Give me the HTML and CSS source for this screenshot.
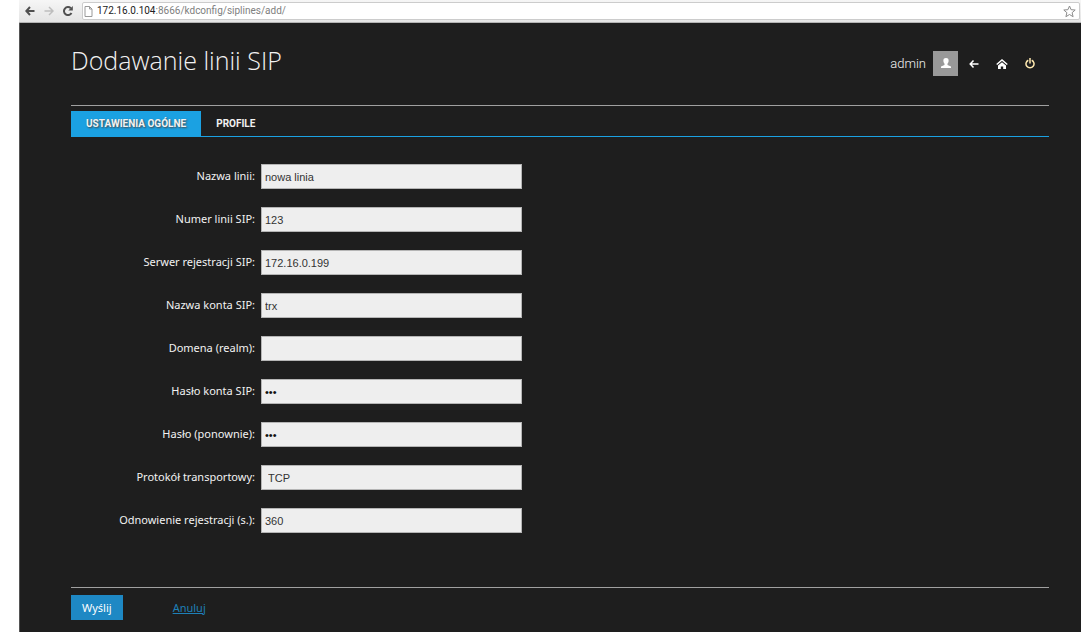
FILE: index.html
```html
<!DOCTYPE html>
<html lang="pl">
<head>
<meta charset="utf-8">
<title>Dodawanie linii SIP</title>
<link rel="stylesheet" href="styles.css">
</head>
<body>
<div class="window">
  <div class="toolbar">
    <button class="nav" type="button" aria-label="Wstecz"><svg width="10" height="10" viewBox="0 0 10 10" fill="none" stroke="#505050" stroke-width="2"><path d="M9.500 5H1.500M5 1L1.300 5L5 9"/></svg></button>
    <button class="nav" type="button" aria-label="Dalej"><svg width="10" height="10" viewBox="0 0 10 10" fill="none" stroke="#bdbdbd" stroke-width="1.500"><path d="M.5 5H8.500M5 1L9 5L5 9"/></svg></button>
    <button class="nav" type="button" aria-label="Odśwież"><svg width="10" height="10" viewBox="0 0 10 10"><path d="M8.500 7A4 4 0 1 1 7.800 2.200" fill="none" stroke="#505050" stroke-width="2"/><path d="M9.800 0V4.500H5.300Z" fill="#505050"/></svg></button>
    <div class="address">
      <svg width="9" height="11" viewBox="0 0 9 11" fill="#fff" stroke="#999"><path d="M1 .5H5.500L8 3V10.500H1ZM5.500 .5V3H8"/></svg>
      <span class="url"><span class="host">172.16.0.104</span>:8666/kdconfig/siplines/add/</span>
      <button class="star" type="button" aria-label="Zakładka"><svg width="13" height="13" viewBox="0 0 13 13" fill="none" stroke="#8c8c8c"><path d="M6.500 1L8.100 4.700L12.200 5L9.100 7.700L10.100 11.700L6.500 9.500L2.900 11.700L3.900 7.700L.8 5L4.900 4.700Z"/></svg></button>
    </div>
  </div>
  <main class="page">
    <header class="header">
      <h1 class="title">Dodawanie linii SIP</h1>
      <div class="user">
        <span class="name">admin</span>
        <span class="avatar"><svg width="12" height="11" viewBox="0 0 12 11" fill="#fff"><path d="M6 0C8 0 8.800 1.300 8.600 3C8.500 4.500 7.800 5.200 7.500 5.800V7L11 8.500V10H1V8.500L4.500 7V5.800C4.200 5.200 3.500 4.500 3.400 3C3.200 1.300 4 0 6 0Z"/></svg></span>
        <a class="icon" href="#" aria-label="Wróć"><svg width="10" height="10" viewBox="0 0 10 10" fill="none" stroke="#fff" stroke-width="1.500"><path d="M9.500 5H1.500M4.500 1.500L1.200 5L4.500 8.500"/></svg></a>
        <a class="icon" href="#" aria-label="Start"><svg width="12" height="10" viewBox="0 0 12 10"><path d="M.7 5.500L6 1L11.300 5.500" fill="none" stroke="#fff" stroke-width="1.500"/><path d="M2 6.500L6 3.200L10 6.500V10H7.200V7.500H4.800V10H2Z" fill="#fff"/></svg></a>
        <a class="icon" href="#" aria-label="Wyloguj"><svg width="10" height="11" viewBox="0 0 10 11" fill="none" stroke="#ffe9b0" stroke-width="1.500"><path d="M3.300 2.200A4 4 0 1 0 6.700 2.200M5 0V5.500"/></svg></a>
      </div>
    </header>
    <nav class="tabs">
      <a class="tab active" href="#">USTAWIENIA OGÓLNE</a>
      <a class="tab" href="#">PROFILE</a>
    </nav>
    <form class="form">
      <div class="fields">
        <label for="line">Nazwa linii:</label><input id="line" type="text" value="nowa linia">
        <label for="number">Numer linii SIP:</label><input id="number" type="text" value="123">
        <label for="server">Serwer rejestracji SIP:</label><input id="server" type="text" value="172.16.0.199">
        <label for="account">Nazwa konta SIP:</label><input id="account" type="text" value="trx">
        <label for="realm">Domena (realm):</label><input id="realm" type="text" value="">
        <label for="pass">Hasło konta SIP:</label><input id="pass" type="password" value="trx">
        <label for="pass2">Hasło (ponownie):</label><input id="pass2" type="password" value="trx">
        <label for="protocol">Protokół transportowy:</label><select id="protocol"><option>TCP</option></select>
        <label for="renew">Odnowienie rejestracji (s.):</label><input id="renew" type="text" value="360">
      </div>
      <div class="actions">
        <button class="submit" type="submit">Wyślij</button>
        <a class="cancel" href="#">Anuluj</a>
      </div>
    </form>
  </main>
</div>
</body>
</html>
```
FILE: styles.css
```css
* { box-sizing: border-box; }
body {
  margin: 0;
  background: #fff;
  font: 11px/16px "Noto Sans", "Open Sans", sans-serif;
}
.window {
  display: flex;
  flex-direction: column;
  min-height: 100vh;
  margin-left: 19px;
}
.toolbar {
  display: flex;
  align-items: center;
  height: 23px;
  padding: 0 1px 0 6px;
  background: linear-gradient(#f6f6f6, #e4e4e4);
  border-bottom: 1px solid #b4b4b4;
}
.nav, .star {
  display: flex;
  padding: 0;
  border: 0;
  background: none;
}
.nav { margin-right: 9px; }
.address {
  display: flex;
  flex: 1;
  align-items: center;
  gap: 4px;
  height: 18px;
  padding: 0 3px 0 1px;
  background: #fff;
  border: 1px solid #ccc;
  border-radius: 2px;
}
.url {
  flex: 1;
  color: #808080;
  font: 10px/14px Roboto, "Open Sans", sans-serif;
}
.host { color: #222; }
.page {
  flex: 1;
  padding: 20px 32px 12px 51px;
  background: #1e1e1e;
  border-left: 1px solid #555;
  border-bottom: 1px solid #35323c;
  color: #f2f2f2;
}
.header {
  display: flex;
  justify-content: space-between;
  align-items: flex-start;
  height: 63px;
  border-bottom: 1px solid #a0a0a0;
}
.title {
  margin: 0;
  font: 300 25px/34px "Open Sans", sans-serif;
}
.user {
  display: flex;
  align-items: center;
  padding: 8px 5px 0 0;
}
.name {
  margin-right: 7px;
  font: 300 13px/20px Roboto, "Open Sans", sans-serif;
}
.avatar {
  display: grid;
  place-items: center;
  width: 25px;
  height: 25px;
  margin-right: 2px;
  background: #999;
}
.icon {
  display: grid;
  place-items: center;
  width: 28px;
  height: 24px;
}
.tabs {
  display: flex;
  margin-top: 5px;
  border-bottom: 1px solid #1ba1e2;
}
.tab {
  padding: 0 15px;
  color: #f2f2f2;
  font: 700 10px/25px Roboto, "Open Sans", sans-serif;
  text-decoration: none;
}
.active {
  background: #1ba1e2;
  text-shadow: 1px 1px 2px #444;
}
.fields {
  display: grid;
  grid-template-columns: 184px 261px;
  align-items: center;
  column-gap: 6px;
  row-gap: 18px;
  padding: 27px 0 54px;
}
.fields label {
  padding-bottom: 2px;
  text-align: right;
}
.fields input, .fields select {
  width: 100%;
  height: 25px;
  padding: 0 3px;
  appearance: none;
  background: #eee;
  border: 1px solid #b5b5b5;
  border-radius: 0;
  color: #333;
  font: 11px/16px "Liberation Sans", Arial, sans-serif;
}
.fields select { padding-left: 6px; }
.fields input[type="password"] { color: #111; }
.actions {
  display: flex;
  align-items: center;
  gap: 50px;
  padding-top: 7px;
  border-top: 1px solid #a0a0a0;
}
.submit {
  height: 25px;
  padding: 0 11px;
  background: #1e88c4;
  border: 0;
  color: #fff;
  font: 11px/16px "Noto Sans", "Open Sans", sans-serif;
}
.cancel { color: #1e80b8; }
```
